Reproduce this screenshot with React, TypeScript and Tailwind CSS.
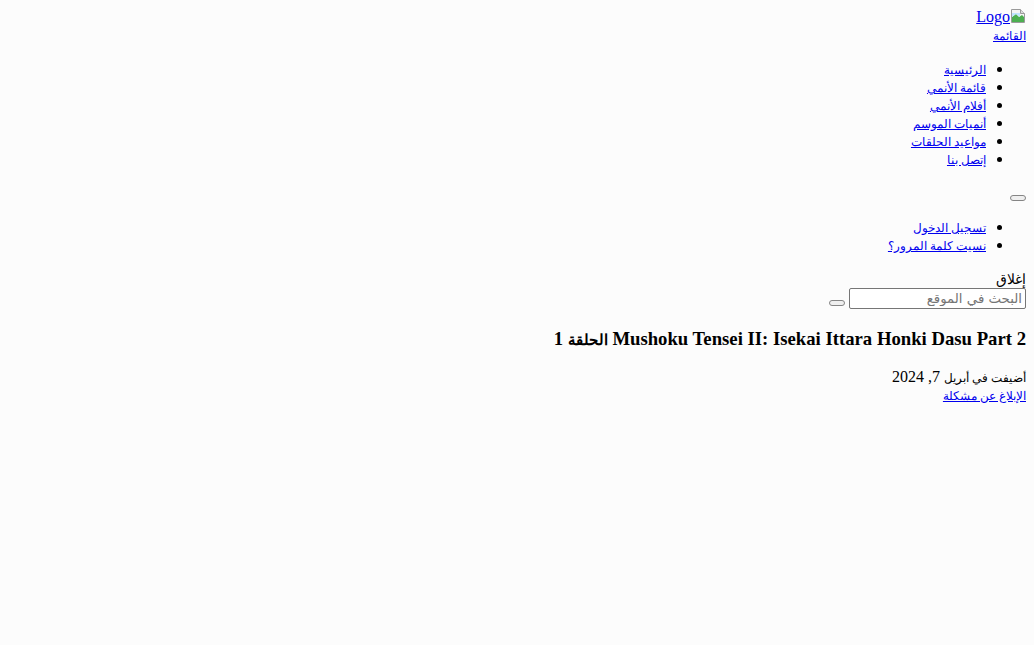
import React from "react";

const A = "text-[#0000ee] underline";

const nav = [
  "الرئيسية",
  "قائمة الأنمي",
  "أفلام الأنمي",
  "أنميات الموسم",
  "مواعيد الحلقات",
  "إتصل بنا",
];

// Arabic runs fall back to a wider font here; shrink them to the reference's widths.
function Ar({ children, big }: { children: React.ReactNode; big?: boolean }) {
  return <span className={big ? "text-[15px]" : "text-[12.2px]"}>{children}</span>;
}

function BrokenImage() {
  return (
    <svg width="16" height="16" viewBox="0 0 16 16" className="block">
      <path d="M1.5 1.5h9l4 4v9h-13z" fill="#f4f4f4" stroke="#9a9a9a" />
      <path d="M10.5 1.5v4h4" fill="#dcdcdc" stroke="#9a9a9a" />
      <path d="M2 9l4-3 3 3 3-2 2 2v5H2z" fill="#4caf50" />
      <path d="M2 5h8v4l-4-3-4 3z" fill="#bfe3ff" />
    </svg>
  );
}

function Btn() {
  return (
    <button className="block h-[6px] w-4 rounded-[3px] border border-[#858585] bg-[#efefef]" />
  );
}

export default function App() {
  return (
    <div
      dir="rtl"
      className="min-h-[645px] bg-[#fcfcfc] p-2 font-['Liberation_Serif',serif] text-[16px] leading-[18px] text-black"
    >
      <header>
        <div className="flex h-[18px]">
          <a href="#" className={`${A} flex items-start`}>
            <BrokenImage />
            <span>Logo</span>
          </a>
        </div>
        <div className="h-[18px]">
          <a href="#" className={A}><Ar>القائمة</Ar></a>
        </div>
        <ul className="my-4 list-disc ps-10">
          {nav.map((n) => (
            <li key={n} className="h-[18px]">
              <a href="#" className={A}><Ar>{n}</Ar></a>
            </li>
          ))}
        </ul>
        <div className="flex h-[18px] items-start pt-[11px]">
          <Btn />
        </div>
        <ul className="my-4 list-disc ps-10">
          <li className="h-[18px]">
            <a href="#" className={A}><Ar>تسجيل الدخول</Ar></a>
          </li>
          <li className="h-[18px]">
            <a href="#" className={A}><Ar>نسيت كلمة المرور؟</Ar></a>
          </li>
        </ul>
        <div className="h-[18px]">
          <span className="text-[14px]">إغلاق</span>
        </div>
        <form className="flex items-start gap-1">
          <input
            placeholder="البحث في الموقع"
            className="h-[21px] w-[177px] rounded-[2px] border border-[#767676] bg-white px-[3px] font-['DejaVu_Sans',sans-serif] text-[13.33px] placeholder:text-[#757575]"
          />
          <div className="pt-[12px]">
            <Btn />
          </div>
        </form>
      </header>
      <main>
        <h3 className="my-[19px] h-[21px] text-[18.72px] leading-[21px] font-bold">
          Mushoku Tensei II: Isekai Ittara Honki Dasu Part 2 <Ar big>الحلقة</Ar> 1
        </h3>
        <div className="h-[18px]">
          <Ar>أضيفت في أبريل</Ar> 7, 2024
        </div>
        <div className="h-[18px]">
          <a href="#" className={A}><Ar>الإبلاغ عن مشكلة</Ar></a>
        </div>
      </main>
    </div>
  );
}
